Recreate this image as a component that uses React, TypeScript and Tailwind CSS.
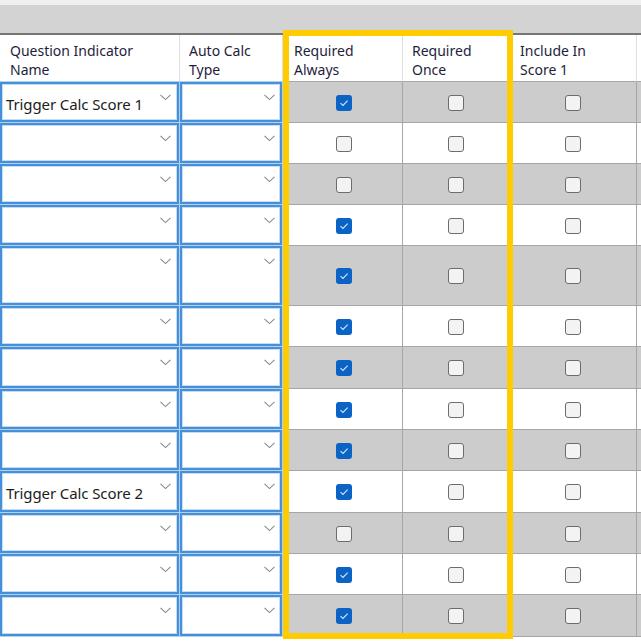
import React from 'react';

const ROWS: { name: string; h: string; always: boolean }[] = [
  { name: 'Trigger Calc Score 1', h: 'h-[41px]', always: true },
  { name: '', h: 'h-[41px]', always: false },
  { name: '', h: 'h-[41px]', always: false },
  { name: '', h: 'h-[41px]', always: true },
  { name: '', h: 'h-[60px]', always: true },
  { name: '', h: 'h-[41px]', always: true },
  { name: '', h: 'h-[42px]', always: true },
  { name: '', h: 'h-[41px]', always: true },
  { name: '', h: 'h-[41px]', always: true },
  { name: 'Trigger Calc Score 2', h: 'h-[42px]', always: true },
  { name: '', h: 'h-[41px]', always: false },
  { name: '', h: 'h-[41px]', always: true },
  { name: '', h: 'h-[42px]', always: true },
];

const COLS = 'grid grid-cols-[180px_103px_120px_110px_124px_60px]';

function Chevron() {
  return (
    <svg width="11" height="7" viewBox="0 0 11 7" className="shrink-0">
      <path d="M0.5 0.8 L5.5 5.6 L10.5 0.8" fill="none" stroke="#8a8a8a" strokeWidth="1.1" />
    </svg>
  );
}

function Dropdown({ text, right }: { text: string; right: string }) {
  return (
    <div className="relative h-full border-2 border-[#4690da] bg-white shadow-[inset_0_0_0_1px_#c4ddf5,0_0_0_1px_#b3d1ef]">
      <div className={`absolute top-[10px] ${right}`}>
        <Chevron />
      </div>
      {text && (
        <div className="flex h-full items-center pl-[4px] pt-[4px] text-[15px] tracking-[-0.1px] text-[#1c1c1c]">
          {text}
        </div>
      )}
    </div>
  );
}

function Checkbox({ checked }: { checked: boolean }) {
  if (checked) {
    return (
      <div className="flex h-[16px] w-[16px] items-center justify-center rounded-[3px] bg-[#0c63c6]">
        <svg width="10" height="8" viewBox="0 0 10 8">
          <path d="M1.5 4.2 L4 6.4 L8.6 1.6" fill="none" stroke="#d6e6f8" strokeWidth="1.1" />
        </svg>
      </div>
    );
  }
  return <div className="h-[16px] w-[16px] rounded-[3px] border border-[#6c6c6c] bg-[#f3f3f3]" />;
}

function Header({ lines, pl, last }: { lines: string[]; pl: string; last?: boolean }) {
  return (
    <div
      className={`h-[47px] border-b border-[#a8a8a8] bg-white pt-[6px] ${pl} text-[14px] leading-[19px] text-[#1e1e3c] ${
        last ? '' : 'border-r border-r-[#e0e0e0]'
      }`}
    >
      {lines.map((l) => (
        <div key={l}>{l}</div>
      ))}
    </div>
  );
}

export default function App() {
  return (
    <div className="relative h-[641px] w-[641px] overflow-hidden bg-white font-['Segoe_UI','Noto_Sans',sans-serif]">
      <div className="h-[5px] bg-[#f0f0f0]" />
      <div className="h-[28px] bg-[#d3d3d3]" />
      <div className="h-[2px] bg-[#767676]" />

      <div className={COLS}>
        <Header lines={['Question Indicator', 'Name']} pl="pl-[10px]" />
        <Header lines={['Auto Calc', 'Type']} pl="pl-[9px]" />
        <Header lines={['Required', 'Always']} pl="pl-[11px]" />
        <Header lines={['Required', 'Once']} pl="pl-[9px]" />
        <Header lines={['Include In', 'Score 1']} pl="pl-[7px]" />
        <Header lines={['']} pl="pl-[7px]" last />
      </div>

      {ROWS.map((r, i) => {
        const bg = i % 2 === 0 ? 'bg-[#cccccc]' : 'bg-white';
        return (
          <div key={i} className={`${COLS} ${r.h}`}>
            <div className="bg-[#a9a9a9] pb-px pr-px">
              <Dropdown text={r.name} right="right-[6px]" />
            </div>
            <div className="bg-[#a9a9a9] pb-px pr-px">
              <Dropdown text="" right="right-[5px]" />
            </div>
            <div className={`flex items-center justify-center border-b border-r border-[#a6a6a6] pl-[3px] pt-px ${bg}`}>
              <Checkbox checked={r.always} />
            </div>
            <div className={`flex items-center justify-center border-b border-[#a6a6a6] pr-[4px] pt-px ${bg}`}>
              <Checkbox checked={false} />
            </div>
            <div className={`flex items-center justify-center border-b border-r border-[#a6a6a6] pr-[4px] pt-px ${bg}`}>
              <Checkbox checked={false} />
            </div>
            <div className={`border-b border-[#a6a6a6] ${bg}`} />
          </div>
        );
      })}

      {/* highlight frame drawn over the two "Required" columns */}
      <div className="pointer-events-none absolute left-[283px] top-[30px] h-[609px] w-[230px] border-[6px] border-[#ffcc00]" />
    </div>
  );
}
